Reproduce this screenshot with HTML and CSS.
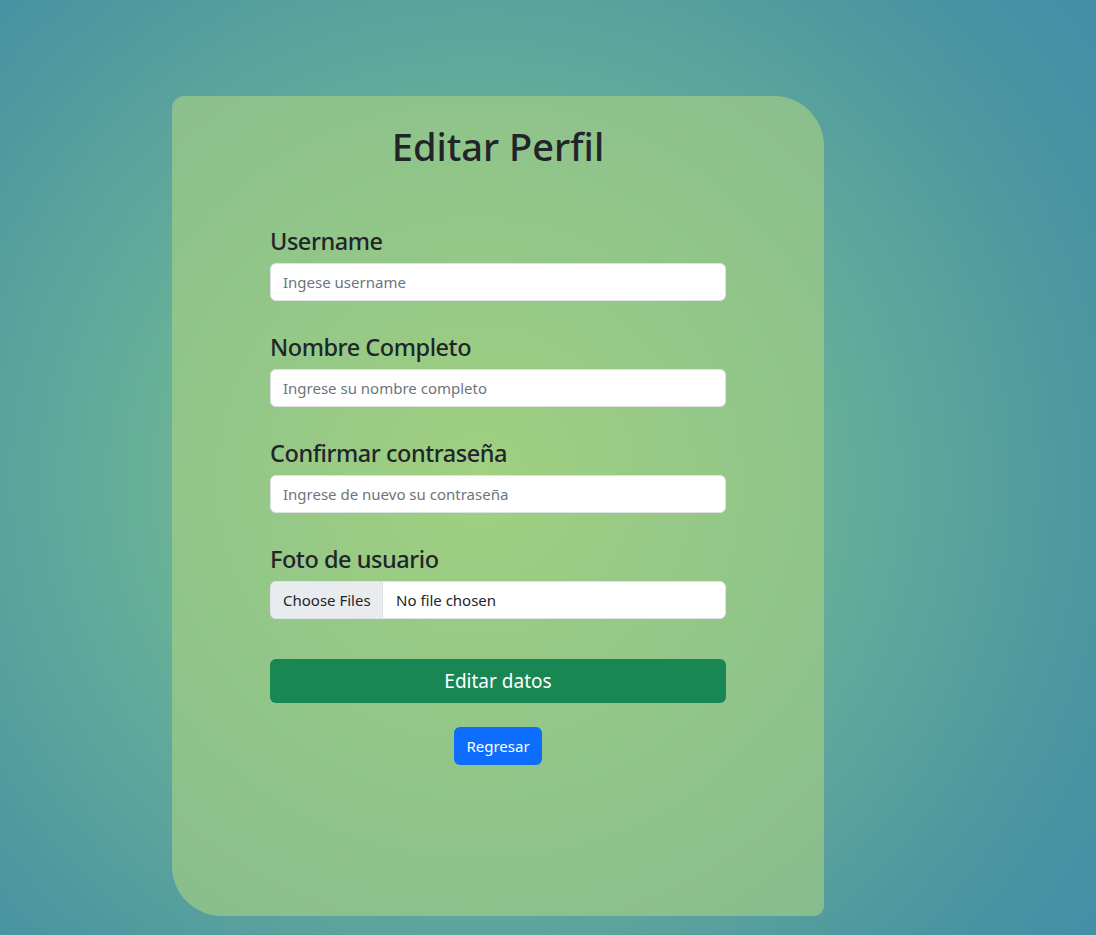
FILE: index.html
```html
<!DOCTYPE html>
<html lang="es">
<head>
<meta charset="utf-8">
<title>Editar Perfil</title>
<link rel="stylesheet" href="styles.css">
</head>
<body>
<main class="page">
  <section class="card">
    <h1 class="title">Editar Perfil</h1>
    <form class="form">
      <div class="group">
        <label class="label" for="username">Username</label>
        <input class="control" id="username" type="text" placeholder="Ingese username">
      </div>
      <div class="group">
        <label class="label" for="nombre">Nombre Completo</label>
        <input class="control" id="nombre" type="text" placeholder="Ingrese su nombre completo">
      </div>
      <div class="group">
        <label class="label" for="pass">Confirmar contraseña</label>
        <input class="control" id="pass" type="password" placeholder="Ingrese de nuevo su contraseña">
      </div>
      <div class="group">
        <label class="label" for="foto">Foto de usuario</label>
        <div class="file">
          <span class="file-btn">Choose Files</span>
          <span class="file-name">No file chosen</span>
        </div>
      </div>
      <button class="btn-submit" type="button">Editar datos</button>
      <div class="back-row">
        <a class="btn-back" href="#">Regresar</a>
      </div>
    </form>
  </section>
</main>
</body>
</html>
```
FILE: styles.css
```css
* { box-sizing: border-box; }

html, body {
  margin: 0;
  height: 100%;
}

body {
  font-family: "Noto Sans", "Open Sans", sans-serif;
  color: #212529;
  background: radial-gradient(circle at 480px 480px, #90cd7e 0px, #6ab396 300px, #5ba39d 470px, #4b96a0 626px, #428ea8 780px);
  overflow: hidden;
}

.page {
  padding: 96px 0 0 172px;
}

.card {
  width: 652px;
  height: 820px;
  background: rgba(172, 210, 130, 0.6);
  border-radius: 12px 50px 10px 50px;
  padding: 28px 98px 0;
  display: flex;
  flex-direction: column;
}

.title {
  margin: 0;
  text-align: center;
  font-size: 38px;
  font-weight: 500;
  line-height: 1.2;
}

.form {
  display: flex;
  flex-direction: column;
  margin-top: 57px;
}

.group {
  display: flex;
  flex-direction: column;
  margin-bottom: 32px;
}

.label {
  font-size: 23.5px;
  font-weight: 500;
  line-height: 1.2;
  letter-spacing: -0.45px;
  margin-bottom: 8px;
}

.control {
  height: 38px;
  width: 100%;
  border: 1px solid #dee2e6;
  border-radius: 6px;
  padding: 6px 12px;
  font-family: inherit;
  font-size: 15px;
  color: #212529;
  background: #fff;
}

.control::placeholder {
  color: #6c757d;
  opacity: 1;
}

.file {
  height: 38px;
  display: flex;
  align-items: stretch;
  border: 1px solid #dee2e6;
  border-radius: 6px;
  background: #fff;
  overflow: hidden;
  font-size: 15px;
}

.file-btn {
  display: flex;
  align-items: center;
  padding: 0 11px 0 12px;
  background: #e9ecef;
  border-right: 1px solid #dee2e6;
  width: 112px;
}

.file-name {
  display: flex;
  align-items: center;
  padding-left: 13px;
}

.btn-submit {
  margin-top: 8px;
  height: 44px;
  width: 100%;
  border: 0;
  border-radius: 6px;
  background: #198754;
  color: #fff;
  font-family: inherit;
  font-size: 19px;
}

.back-row {
  display: flex;
  justify-content: center;
  margin-top: 24px;
}

.btn-back {
  display: inline-flex;
  align-items: center;
  justify-content: center;
  height: 38px;
  width: 88px;
  border-radius: 6px;
  background: #0d6efd;
  color: #fff;
  text-decoration: none;
  font-size: 15px;
}
```
